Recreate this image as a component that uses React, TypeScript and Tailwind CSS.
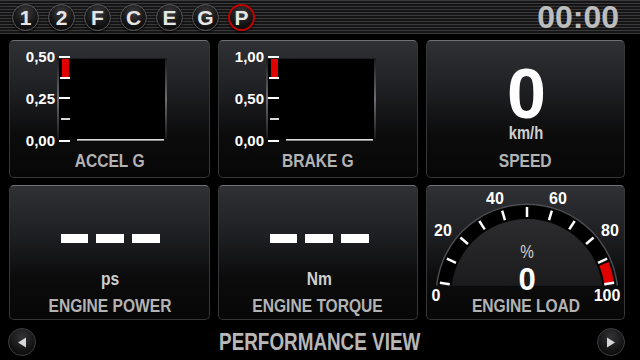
import React from "react";

const gears = ["1", "2", "F", "C", "E", "G", "P"];

function Narrow({ children, className }: { children: React.ReactNode; className?: string }) {
  return <span className={`inline-block origin-center scale-x-[0.82] whitespace-nowrap ${className ?? ""}`}>{children}</span>;
}

function GearButton({ label, active }: { label: string; active?: boolean }) {
  return (
    <div
      className={`flex h-[27px] w-[27px] items-center justify-center rounded-full bg-[radial-gradient(circle_at_50%_30%,#3d3d3f_0%,#161617_55%,#050505_100%)] text-[21px] font-bold leading-none text-[#e6e6e6] shadow-[0_1px_2px_#000] ${
        active ? "border-2 border-[#c40000]" : "border border-[#5a5a5e]"
      }`}
    >
      {label}
    </div>
  );
}

function Card({ label, children }: { label: string; children?: React.ReactNode }) {
  return (
    <div className="relative flex flex-col overflow-hidden rounded-[5px] border border-[#35363a] border-t-[#707176] bg-[linear-gradient(to_bottom,#303135_0%,#1f2023_35%,#0c0c0d_68%,#070707_100%)] shadow-[0_0_0_2px_#000]">
      <div className="relative h-[111px]">{children}</div>
      <div className="relative text-center text-[19px] font-bold leading-[18px] text-[#b3b3b3]">
        <Narrow>{label}</Narrow>
      </div>
    </div>
  );
}

function GChart({ top, mid }: { top: string; mid: string }) {
  return (
    <div className="flex pl-[11px] pt-[7px]">
      <div className="flex h-[102px] w-[35px] flex-col items-end justify-between pr-[1px] text-[15px] font-bold leading-[18px] text-white">
        <span>{top}</span>
        <span>{mid}</span>
        <span>0,00</span>
      </div>
      <svg width="114" height="102">
        <defs>
          <linearGradient id="edge" x1="0" y1="0" x2="0" y2="1">
            <stop offset="0" stopColor="#1a1a1c" />
            <stop offset="0.5" stopColor="#6c6d72" />
            <stop offset="1" stopColor="#1a1a1c" />
          </linearGradient>
        </defs>
        <rect x="1" y="10" width="110" height="81" fill="#000" />
        <rect x="1" y="10" width="110" height="1" fill="#1e1e20" />
        <rect x="1" y="10" width="2" height="81" fill="url(#edge)" />
        <rect x="109" y="10" width="2" height="81" fill="url(#edge)" />
        <rect x="6" y="11" width="7" height="19" fill="#e00000" />
        <rect x="3" y="8" width="11" height="2" fill="#fff" />
        <rect x="4" y="29" width="10" height="2" fill="#fff" />
        <rect x="3" y="49" width="11" height="2" fill="#fff" />
        <rect x="5" y="70" width="9" height="2" fill="#d8d8d8" />
        <rect x="3" y="92" width="11" height="2" fill="#fff" />
        <rect x="21" y="91" width="87" height="1" fill="#dcdcdc" />
        <rect x="21" y="92" width="87" height="1" fill="#8a8a8a" />
      </svg>
    </div>
  );
}

function Dashes({ unit }: { unit: string }) {
  return (
    <div className="flex flex-col items-center pl-[2px] pt-[48px]">
      <div className="flex gap-[8px]">
        <div className="h-[9px] w-[27px] bg-white" />
        <div className="h-[9px] w-[28px] bg-white" />
        <div className="h-[9px] w-[28px] bg-white" />
      </div>
      <div className="mt-[27px] text-[19px] font-bold leading-[18px] text-[#cfcfcf]">
        <Narrow>{unit}</Narrow>
      </div>
    </div>
  );
}

const CX = 100;
const CY = 109;
const ang = (v: number) => ((172 - 1.64 * v) * Math.PI) / 180;
const pt = (r: number, v: number) => [CX + r * Math.cos(ang(v)), CY - r * Math.sin(ang(v))];

function band(v1: number, v2: number, r1: number, r2: number) {
  const [ax, ay] = pt(r2, v1);
  const [bx, by] = pt(r2, v2);
  const [cx, cy] = pt(r1, v2);
  const [dx, dy] = pt(r1, v1);
  return `M${ax} ${ay} A${r2} ${r2} 0 0 1 ${bx} ${by} L${cx} ${cy} A${r1} ${r1} 0 0 0 ${dx} ${dy} Z`;
}

function LoadGauge() {
  const ticks = [0, 10, 20, 30, 40, 50, 60, 70, 80, 90, 100];
  const labels: [string, number, number][] = [
    ["0", 9, 109],
    ["20", 16, 44],
    ["40", 68, 12],
    ["60", 131, 12],
    ["80", 183, 44],
    ["100", 180, 109],
  ];
  return (
    <svg className="absolute left-0 top-0" width="197" height="133" viewBox="0 0 197 133">
      <defs>
        <clipPath id="gclip">
          <rect x="0" y="0" width="197" height="99.5" />
        </clipPath>
        <linearGradient id="dome" x1="0" y1="0" x2="0" y2="1">
          <stop offset="0" stopColor="#2c2c2f" />
          <stop offset="0.6" stopColor="#151516" />
          <stop offset="1" stopColor="#080808" />
        </linearGradient>
      </defs>
      <g clipPath="url(#gclip)">
        <circle cx={CX} cy={CY} r="91.5" fill="#4c4d52" />
        <circle cx={CX} cy={CY} r="90" fill="#000" />
        <circle cx={CX} cy={CY} r="76" fill="url(#dome)" />
      </g>
      <path d={band(91.5, 100, 78, 88)} fill="#e00000" />
      {ticks.map((v) => {
        const [x1, y1] = pt(78, v);
        const [x2, y2] = pt(88, v);
        return <line key={v} x1={x1} y1={y1} x2={x2} y2={y2} stroke="#fff" strokeWidth="2.5" />;
      })}
      {labels.map(([t, x, y]) => (
        <text
          key={t}
          x={x}
          y={y}
          textAnchor="middle"
          dominantBaseline="central"
          fill="#fff"
          fontSize="16"
          fontWeight="700"
          fontFamily="'Liberation Sans', Arial, sans-serif"
        >
          {t}
        </text>
      ))}
      <text
        x={CX}
        y={66}
        textAnchor="middle"
        dominantBaseline="central"
        fill="#d0d0d0"
        fontSize="18"
        fontFamily="'Liberation Sans', Arial, sans-serif"
        transform={`translate(${CX} 0) scale(0.85 1) translate(${-CX} 0)`}
      >
        %
      </text>
      <text
        x={CX}
        y={93}
        textAnchor="middle"
        dominantBaseline="central"
        fill="#fff"
        fontSize="31"
        fontWeight="700"
        fontFamily="'Liberation Sans', Arial, sans-serif"
      >
        0
      </text>
    </svg>
  );
}

function ArrowButton({ dir }: { dir: "left" | "right" }) {
  return (
    <div className="flex h-[28px] w-[28px] items-center justify-center rounded-full border border-[#3e3e42] bg-[radial-gradient(circle_at_50%_30%,#333336_0%,#141415_60%,#050505_100%)] shadow-[0_0_0_1px_#000]">
      <svg width="10" height="11" viewBox="0 0 10 11">
        {dir === "left" ? (
          <path d="M9 0.5 L1 5.5 L9 10.5 Z" fill="#d6d6d6" />
        ) : (
          <path d="M1 0.5 L9 5.5 L1 10.5 Z" fill="#d6d6d6" />
        )}
      </svg>
    </div>
  );
}

export default function App() {
  return (
    <div className="flex h-[360px] w-[640px] flex-col overflow-hidden bg-black font-['Liberation_Sans',Arial,sans-serif]">
      <div className="flex h-[34px] items-center bg-[repeating-linear-gradient(to_bottom,#3a3a3c_0px,#3a3a3c_1px,#151516_1px,#151516_3px)] pl-[12px] pr-[21px]">
        <div className="flex gap-[9px]">
          {gears.map((g) => (
            <GearButton key={g} label={g} active={g === "P"} />
          ))}
        </div>
        <div className="ml-auto text-[32px] font-bold leading-none text-[#bdbdbd]">00:00</div>
      </div>

      <div className="grid grid-cols-[201px_200px_199px] grid-rows-[138px_135px] gap-x-[8px] gap-y-[7px] pl-[9px] pt-[6px]">
        <Card label="ACCEL G">
          <GChart top="0,50" mid="0,25" />
        </Card>
        <Card label="BRAKE G">
          <GChart top="1,00" mid="0,50" />
        </Card>
        <Card label="SPEED">
          <div className="flex flex-col items-center pl-[2px]">
            <div className="mt-[23px] text-[70px] font-bold leading-[60px] text-white">0</div>
            <div className="text-[18px] font-bold leading-[18px] text-[#d0d0d0]">
              <Narrow>km/h</Narrow>
            </div>
          </div>
        </Card>
        <Card label="ENGINE POWER">
          <Dashes unit="ps" />
        </Card>
        <Card label="ENGINE TORQUE">
          <Dashes unit="Nm" />
        </Card>
        <Card label="ENGINE LOAD">
          <LoadGauge />
        </Card>
      </div>

      <div className="flex flex-1 items-center justify-between pl-[8px] pr-[15px] pt-[4px]">
        <ArrowButton dir="left" />
        <div className="pl-[6px] text-[23px] font-bold leading-none text-[#b8b8b8]">
          <Narrow>PERFORMANCE VIEW</Narrow>
        </div>
        <ArrowButton dir="right" />
      </div>
    </div>
  );
}
